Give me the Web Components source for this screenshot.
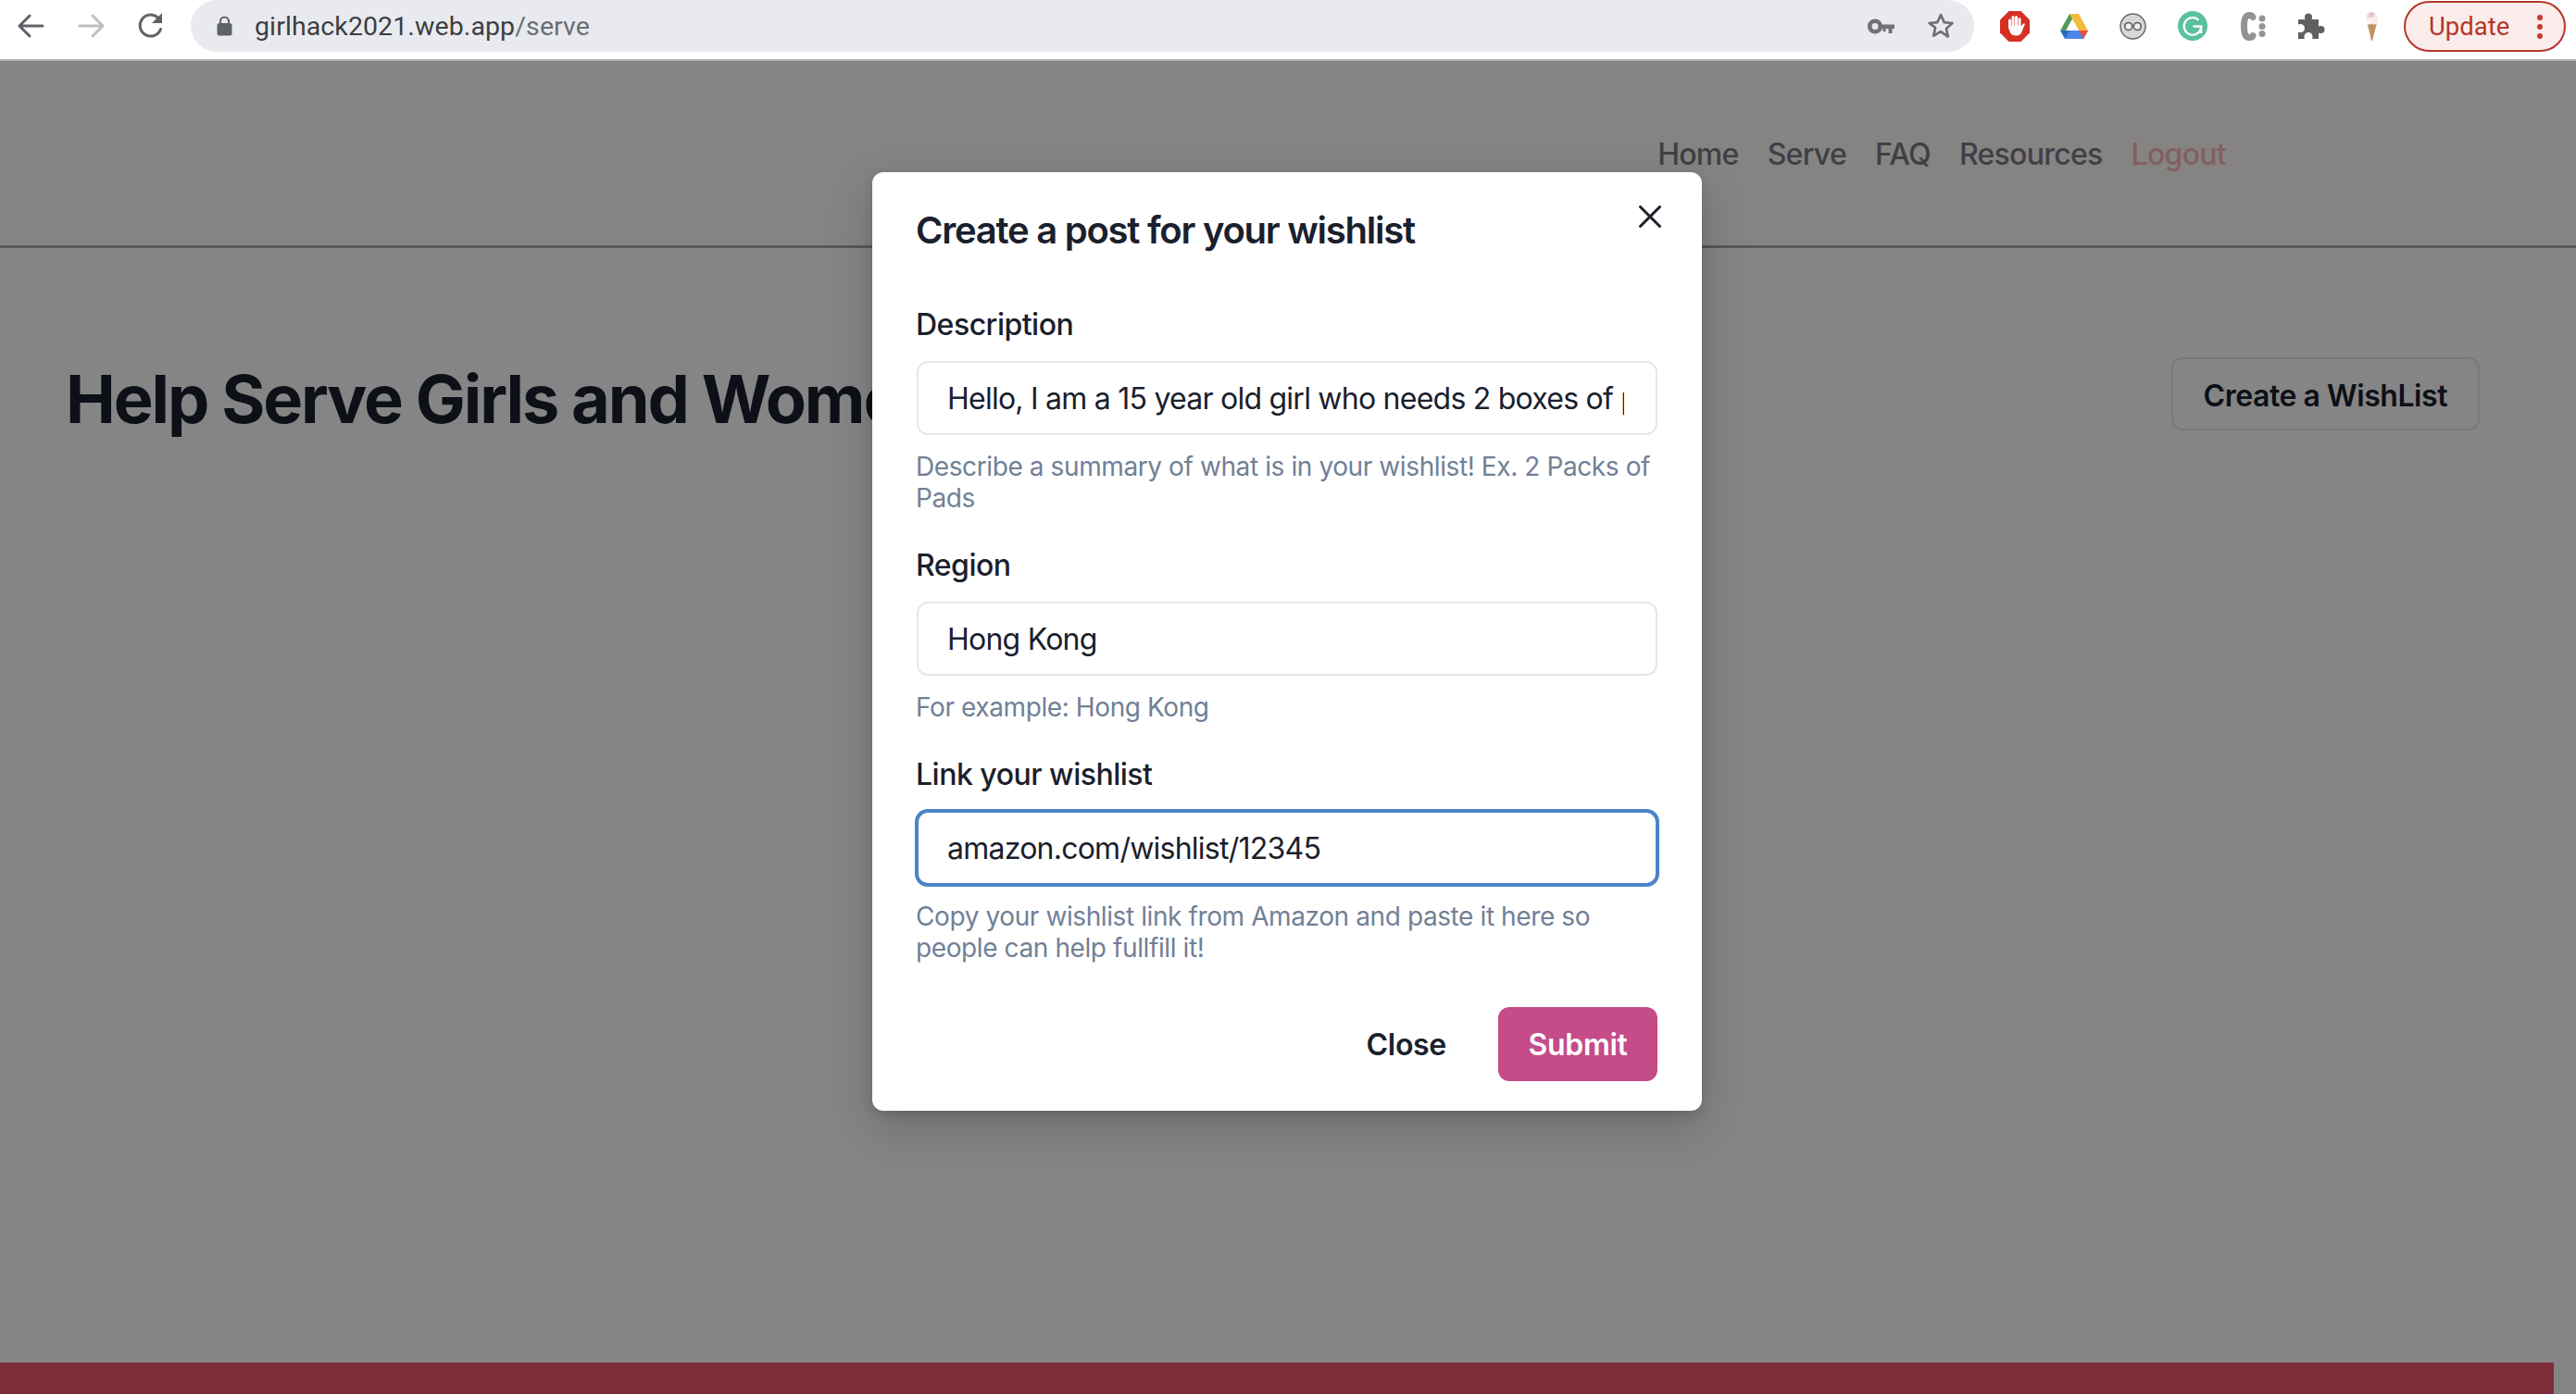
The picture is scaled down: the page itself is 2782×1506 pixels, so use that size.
<!DOCTYPE html>
<html lang="en">
<head>
<meta charset="utf-8">
<title>girlhack2021.web.app/serve</title>
<style>
html,body{margin:0;padding:0;height:100%;overflow:hidden;background:#fff;font-family:Inter,"Liberation Sans",sans-serif;}
</style>
</head>
<body>
<app-shell>
  <browser-bar slot="chrome" url-host="girlhack2021.web.app" url-path="/serve"></browser-bar>
  <site-header>
    <nav-link>Home</nav-link>
    <nav-link>Serve</nav-link>
    <nav-link>FAQ</nav-link>
    <nav-link>Resources</nav-link>
    <nav-link logout>Logout</nav-link>
  </site-header>
  <page-hero heading="Help Serve Girls and Women">
    <ui-button variant="outline">Create a WishList</ui-button>
  </page-hero>
  <site-footer></site-footer>
  <modal-dialog slot="overlay" heading="Create a post for your wishlist">
    <form-field label="Description" value="Hello, I am a 15 year old girl who needs 2 boxes of pads">Describe a summary of what is in your wishlist! Ex. 2 Packs of Pads</form-field>
    <form-field label="Region" value="Hong Kong">For example: Hong Kong</form-field>
    <form-field label="Link your wishlist" value="amazon.com/wishlist/12345" focused last>Copy your wishlist link from Amazon and paste it here so people can help fullfill it!</form-field>
    <ui-button slot="footer" variant="ghost">Close</ui-button>
    <ui-button slot="footer" variant="solid">Submit</ui-button>
  </modal-dialog>
</app-shell>
<script>
function def(name, html, init){
  customElements.define(name, class extends HTMLElement{
    constructor(){super();this.attachShadow({mode:'open'}).innerHTML=html;}
    connectedCallback(){ if(init) init(this,this.shadowRoot); }
  });
}

def('app-shell',`<style>
:host{display:flex;flex-direction:column;height:1506px;width:2782px;position:relative;overflow:hidden;background:#fff}
.page{flex:1;display:flex;flex-direction:column;position:relative;min-height:0}
.overlay{position:absolute;inset:0;padding-right:2px;background:rgba(0,0,0,.48);display:flex;justify-content:center;align-items:flex-start}
</style>
<slot name="chrome"></slot>
<div class="page"><slot></slot><div class="overlay"><slot name="overlay"></slot></div></div>`);

def('browser-bar',`<style>
:host{display:flex;align-items:flex-start;height:64px;border-bottom:2px solid #b2b2ae;background:#fff;flex:none;box-sizing:content-box;font-family:Roboto,Inter,sans-serif}
.nav{display:flex;width:206px;flex:none;height:56px;align-items:center}
.nav svg{display:block;flex:none}
.omni{width:1926px;flex:none;height:56px;border-radius:28px;background:#e9eaef;display:flex;align-items:center;padding:0 17px 0 28px;box-sizing:border-box}
.url{margin-left:24px;font-size:28.5px;color:#3c3e42;flex:1;white-space:nowrap;letter-spacing:.1px}
.url span{color:#6a6d72}
.exts{display:flex;align-items:center;height:56px;flex:none}
.update{width:175px;height:55px;box-sizing:border-box;border:2px solid #b5362b;border-radius:28px;background:#f9ecea;color:#b5362b;font-size:27.5px;display:flex;align-items:center;padding-left:25px;position:relative}
.dots{position:absolute;left:142px;top:13px;width:6px;height:26px;display:flex;flex-direction:column;justify-content:space-between}
.dots i{display:block;width:6px;height:6px;border-radius:50%;background:#c8392d}
</style>
<div class="nav">
<svg style="margin-left:19px" width="29" height="26" viewBox="0 0 29 26" fill="none" stroke="#5f6368" stroke-width="3" stroke-linecap="round" stroke-linejoin="round"><path d="M27 13H2.5M13 2 2 13l11 11"/></svg>
<svg style="margin-left:36px" width="29" height="26" viewBox="0 0 29 26" fill="none" stroke="#bdbfc2" stroke-width="3" stroke-linecap="round" stroke-linejoin="round"><path d="M2 13h24.500M16 2l11 11-11 11"/></svg>
<svg style="margin-left:35px" width="30" height="30" viewBox="0 0 30 30" fill="none"><path d="M25.500 18.500A11.500 11.500 0 1 1 23 6.600" stroke="#5f6368" stroke-width="3" stroke-linecap="round"/><path d="M27 1v11H16z" fill="#5f6368"/></svg>
</div>
<div class="omni">
<svg width="17" height="22" viewBox="0 0 17 22"><path d="M4 9V6a4.500 4.500 0 0 1 9 0v3" fill="none" stroke="#5f6368" stroke-width="2"/><rect x="0.500" y="8" width="16" height="13.500" rx="2.500" fill="#5f6368"/></svg>
<div class="url"><b id="h" style="font-weight:400"></b><span id="p"></span></div>
<svg style="margin-right:35px" width="29" height="17" viewBox="0 0 29 17"><circle cx="8" cy="8.500" r="5.800" fill="none" stroke="#707276" stroke-width="4.600"/><path d="M13 6.500h16v4.500h-2.500v5h-4v-5h-3v3h-3v-3H13z" fill="#707276"/></svg>
<svg width="30" height="30" viewBox="0 0 30 30" style="margin-right:4px"><path d="M15 3l3.700 8.100 8.800.9-6.600 5.900 1.900 8.700L15 21.100l-7.800 4.500 1.900-8.700L2.500 12l8.800-.9z" fill="none" stroke="#6c6e72" stroke-width="2.600" stroke-linejoin="round"/></svg>
</div>
<div class="exts">
<svg style="margin-left:28px" width="32" height="33" viewBox="0 0 32 33"><path d="M9.500 0h13L32 9.500v14L22.500 33h-13L0 23.500v-14z" fill="#d63024"/><g fill="none" stroke="#fff" stroke-width="3" stroke-linecap="round"><path d="M10.500 10V18M14 6.500V17M17.500 6.500V17M21 8.500V19"/></g><path d="M9 16h13.500l3-2.500c.9-.6 1.600.2 1.200 1L24 21c-.7 3.500-2.800 5.500-6.500 5.500-4 0-6-1.500-7-4.500z" fill="#fff"/></svg>
<svg style="margin-left:33px" width="30" height="27" viewBox="0 0 30 27"><path d="M10 0 0 18h6L15.200 1.500 15 0z" fill="#4f9b57"/><path d="M10 0h10l10 18H20z" fill="#f3bc3f"/><path d="M6 18h24l-5 9H5z" fill="#4a87e8"/><path d="M0 18h6l4 0-5 9z" fill="#2d66c4"/><path d="M20 18h10l-5 9z" fill="#e6503e"/><path d="M10 18 15 9.500l5 8.500z" fill="#fff"/></svg>
<svg style="margin-left:34px" width="29" height="29" viewBox="0 0 29 29"><circle cx="14.500" cy="14.500" r="13.500" fill="#d8d8d8" stroke="#6a6a6a" stroke-width="1.500"/><circle cx="9.700" cy="14.500" r="4" fill="#efefef" stroke="#5c5c5c" stroke-width="1.600"/><circle cx="19.300" cy="14.500" r="4" fill="#efefef" stroke="#5c5c5c" stroke-width="1.600"/></svg>
<svg style="margin-left:34px" width="32" height="32" viewBox="0 0 32 32"><circle cx="16" cy="16" r="16" fill="#59c19b"/><path d="M22.500 9.700A9.300 9.300 0 1 0 25.200 17.500" fill="none" stroke="#fff" stroke-width="2.300"/><path d="M16.500 16.500h8.700v7.500" fill="none" stroke="#fff" stroke-width="2.300"/></svg>
<svg style="margin-left:33px" width="30" height="33" viewBox="0 0 30 33"><path d="M16 6.500C15 4 13 4.500 12 4.500 8 4.500 6.500 8 6.500 16.500S8 28.500 12 28.500c1 0 3 .5 4-2" fill="none" stroke="#939393" stroke-width="7" stroke-linecap="round"/><circle cx="26" cy="8" r="3.500" fill="#939393"/><circle cx="26" cy="16.500" r="3.500" fill="#939393"/><circle cx="26" cy="24.500" r="3.500" fill="#939393"/></svg>
<svg style="margin-left:34px" width="30" height="30" viewBox="0 0 30 30"><path d="M1 8h7.500a3.500 3.500 0 0 1-.5-2.500 4 4 0 0 1 8 0A3.500 3.500 0 0 1 15.500 8H23v7.500a3.500 3.500 0 0 1 2.500-.5 4 4 0 0 1 0 8 3.500 3.500 0 0 1-2.500-.5V29H16a3.500 3.500 0 0 0 .5-2.500 4.500 4.500 0 0 0-9 0A3.500 3.500 0 0 0 8 29H1v-7.500a3.500 3.500 0 0 0 2.500.5 4.500 4.500 0 0 0 0-9A3.500 3.500 0 0 0 1 13.500z" fill="#5f5f5f"/></svg>
<svg style="margin-left:42px" width="16" height="32" viewBox="0 0 16 32"><path d="M3.500 13l11-2-5.500 21H8z" fill="#bf9466"/><circle cx="8" cy="6" r="5.500" fill="#f3dde0"/><circle cx="11" cy="10" r="4.500" fill="#f7ecea"/><circle cx="5" cy="11" r="3.500" fill="#fbf5f3"/><circle cx="8" cy="4" r="2.500" fill="#e8bcc4"/></svg>
<div class="update" style="margin-left:27px">Update<div class="dots"><i></i><i></i><i></i></div></div>
</div>`,(el,s)=>{s.getElementById('h').textContent=el.getAttribute('url-host');s.getElementById('p').textContent=el.getAttribute('url-path');});

def('site-header',`<style>
:host{display:flex;justify-content:flex-end;gap:31px;height:202px;flex:none;box-sizing:border-box;padding:77px 378px 0 0;background:#fffefa;box-shadow:0 2px 8px rgba(0,0,0,.16);border-bottom:3px solid #aaaaaa;position:relative}
</style><slot></slot>`);

def('nav-link',`<style>
:host{display:block;font-size:32px;line-height:48px;font-weight:500;letter-spacing:-.72px;color:#7a7a86;white-space:nowrap}
:host([logout]){color:#fbb4bc}
</style><slot></slot>`);

def('page-hero',`<style>
:host{display:flex;flex:1;justify-content:space-between;align-items:flex-start;padding:118px 104px 0 71px;background:#fff;overflow:hidden;min-height:0;position:relative}
h1{margin:2px 0 0;font-size:72px;line-height:86px;font-weight:700;letter-spacing:-2.1px;color:#1a202c;white-space:nowrap}
</style><h1></h1><slot></slot>`,(el,s)=>{s.querySelector('h1').textContent=el.getAttribute('heading');});

def('site-footer',`<style>
:host{display:block;height:34px;flex:none;width:2758px;background:#f25570}
</style>`);

def('ui-button',`<style>
:host{display:inline-flex;flex:none;align-items:center;justify-content:center;height:80px;box-sizing:border-box;padding:0 32px;border-radius:12px;font-size:32px;font-weight:600;letter-spacing:-.3px;white-space:nowrap;color:#1a202c}
:host([variant=outline]){border:2px solid #e2e8f0;padding:3px 33px 0;height:79px;letter-spacing:-.45px}
:host([variant=solid]){background:#c54b89;color:#fff;width:172px;padding:0}
</style><slot></slot>`);

def('modal-dialog',`<style>
:host{display:block;position:relative;width:896px;margin-top:120px;background:#fff;border-radius:12px;box-shadow:0 20px 50px rgba(0,0,0,.18),0 4px 12px rgba(0,0,0,.12);color:#1a202c;font-family:Inter,"Liberation Sans",sans-serif}
header{padding:33px 48px 31px 47px;font-size:40px;line-height:60px;font-weight:600;letter-spacing:-1.25px}
.close{position:absolute;top:16px;right:24px;width:64px;height:64px;display:flex;align-items:center;justify-content:center}
.body{padding:16px 48px}
footer{padding:32px 48px;display:flex;justify-content:flex-end;gap:24px}
</style>
<header id="t"></header>
<div class="close" role="button" aria-label="Close"><svg width="24" height="24" viewBox="0 0 24 24"><path fill="#1a202c" d="M.439,21.44a1.5,1.5,0,0,0,2.122,2.121L11.823,14.3a.25.25,0,0,1,.354,0l9.262,9.263a1.5,1.5,0,1,0,2.122-2.121L14.3,12.177a.25.25,0,0,1,0-.354l9.263-9.262A1.5,1.5,0,0,0,21.439.44L12.177,9.7a.25.25,0,0,1-.354,0L2.561.44A1.5,1.5,0,0,0,.439,2.561L9.7,11.823a.25.25,0,0,1,0,.354Z"/></svg></div>
<div class="body"><slot></slot></div>
<footer><slot name="footer"></slot></footer>`,(el,s)=>{s.getElementById('t').textContent=el.getAttribute('heading');});

def('form-field',`<style>
:host{display:block;margin-bottom:31px}
:host([last]){margin-bottom:-1px}
.label{font-size:32px;line-height:48px;font-weight:500;letter-spacing:-.5px;padding-top:1px;margin-bottom:15px;margin-left:-1px}
.input{height:80px;box-sizing:border-box;border:2px solid #e2e8f0;border-radius:12px;padding:2px 34px 0 31px;display:flex;align-items:center;background:#fff;font-size:32px;letter-spacing:-.76px}
.value{overflow:hidden;white-space:nowrap;flex:1;line-height:48px}
:host([focused]) .input{border-color:#4a84c9;box-shadow:0 0 0 2px #4a84c9}
.help{margin-top:17px;margin-left:-1px;font-size:28px;line-height:34px;letter-spacing:-.4px;color:#718096}
</style>
<div class="label" id="l"></div>
<div class="input" role="textbox"><div class="value" id="v"></div></div>
<div class="help"><slot></slot></div>`,(el,s)=>{s.getElementById('l').textContent=el.getAttribute('label');s.getElementById('v').textContent=el.getAttribute('value');});
</script>
</body>
</html>
